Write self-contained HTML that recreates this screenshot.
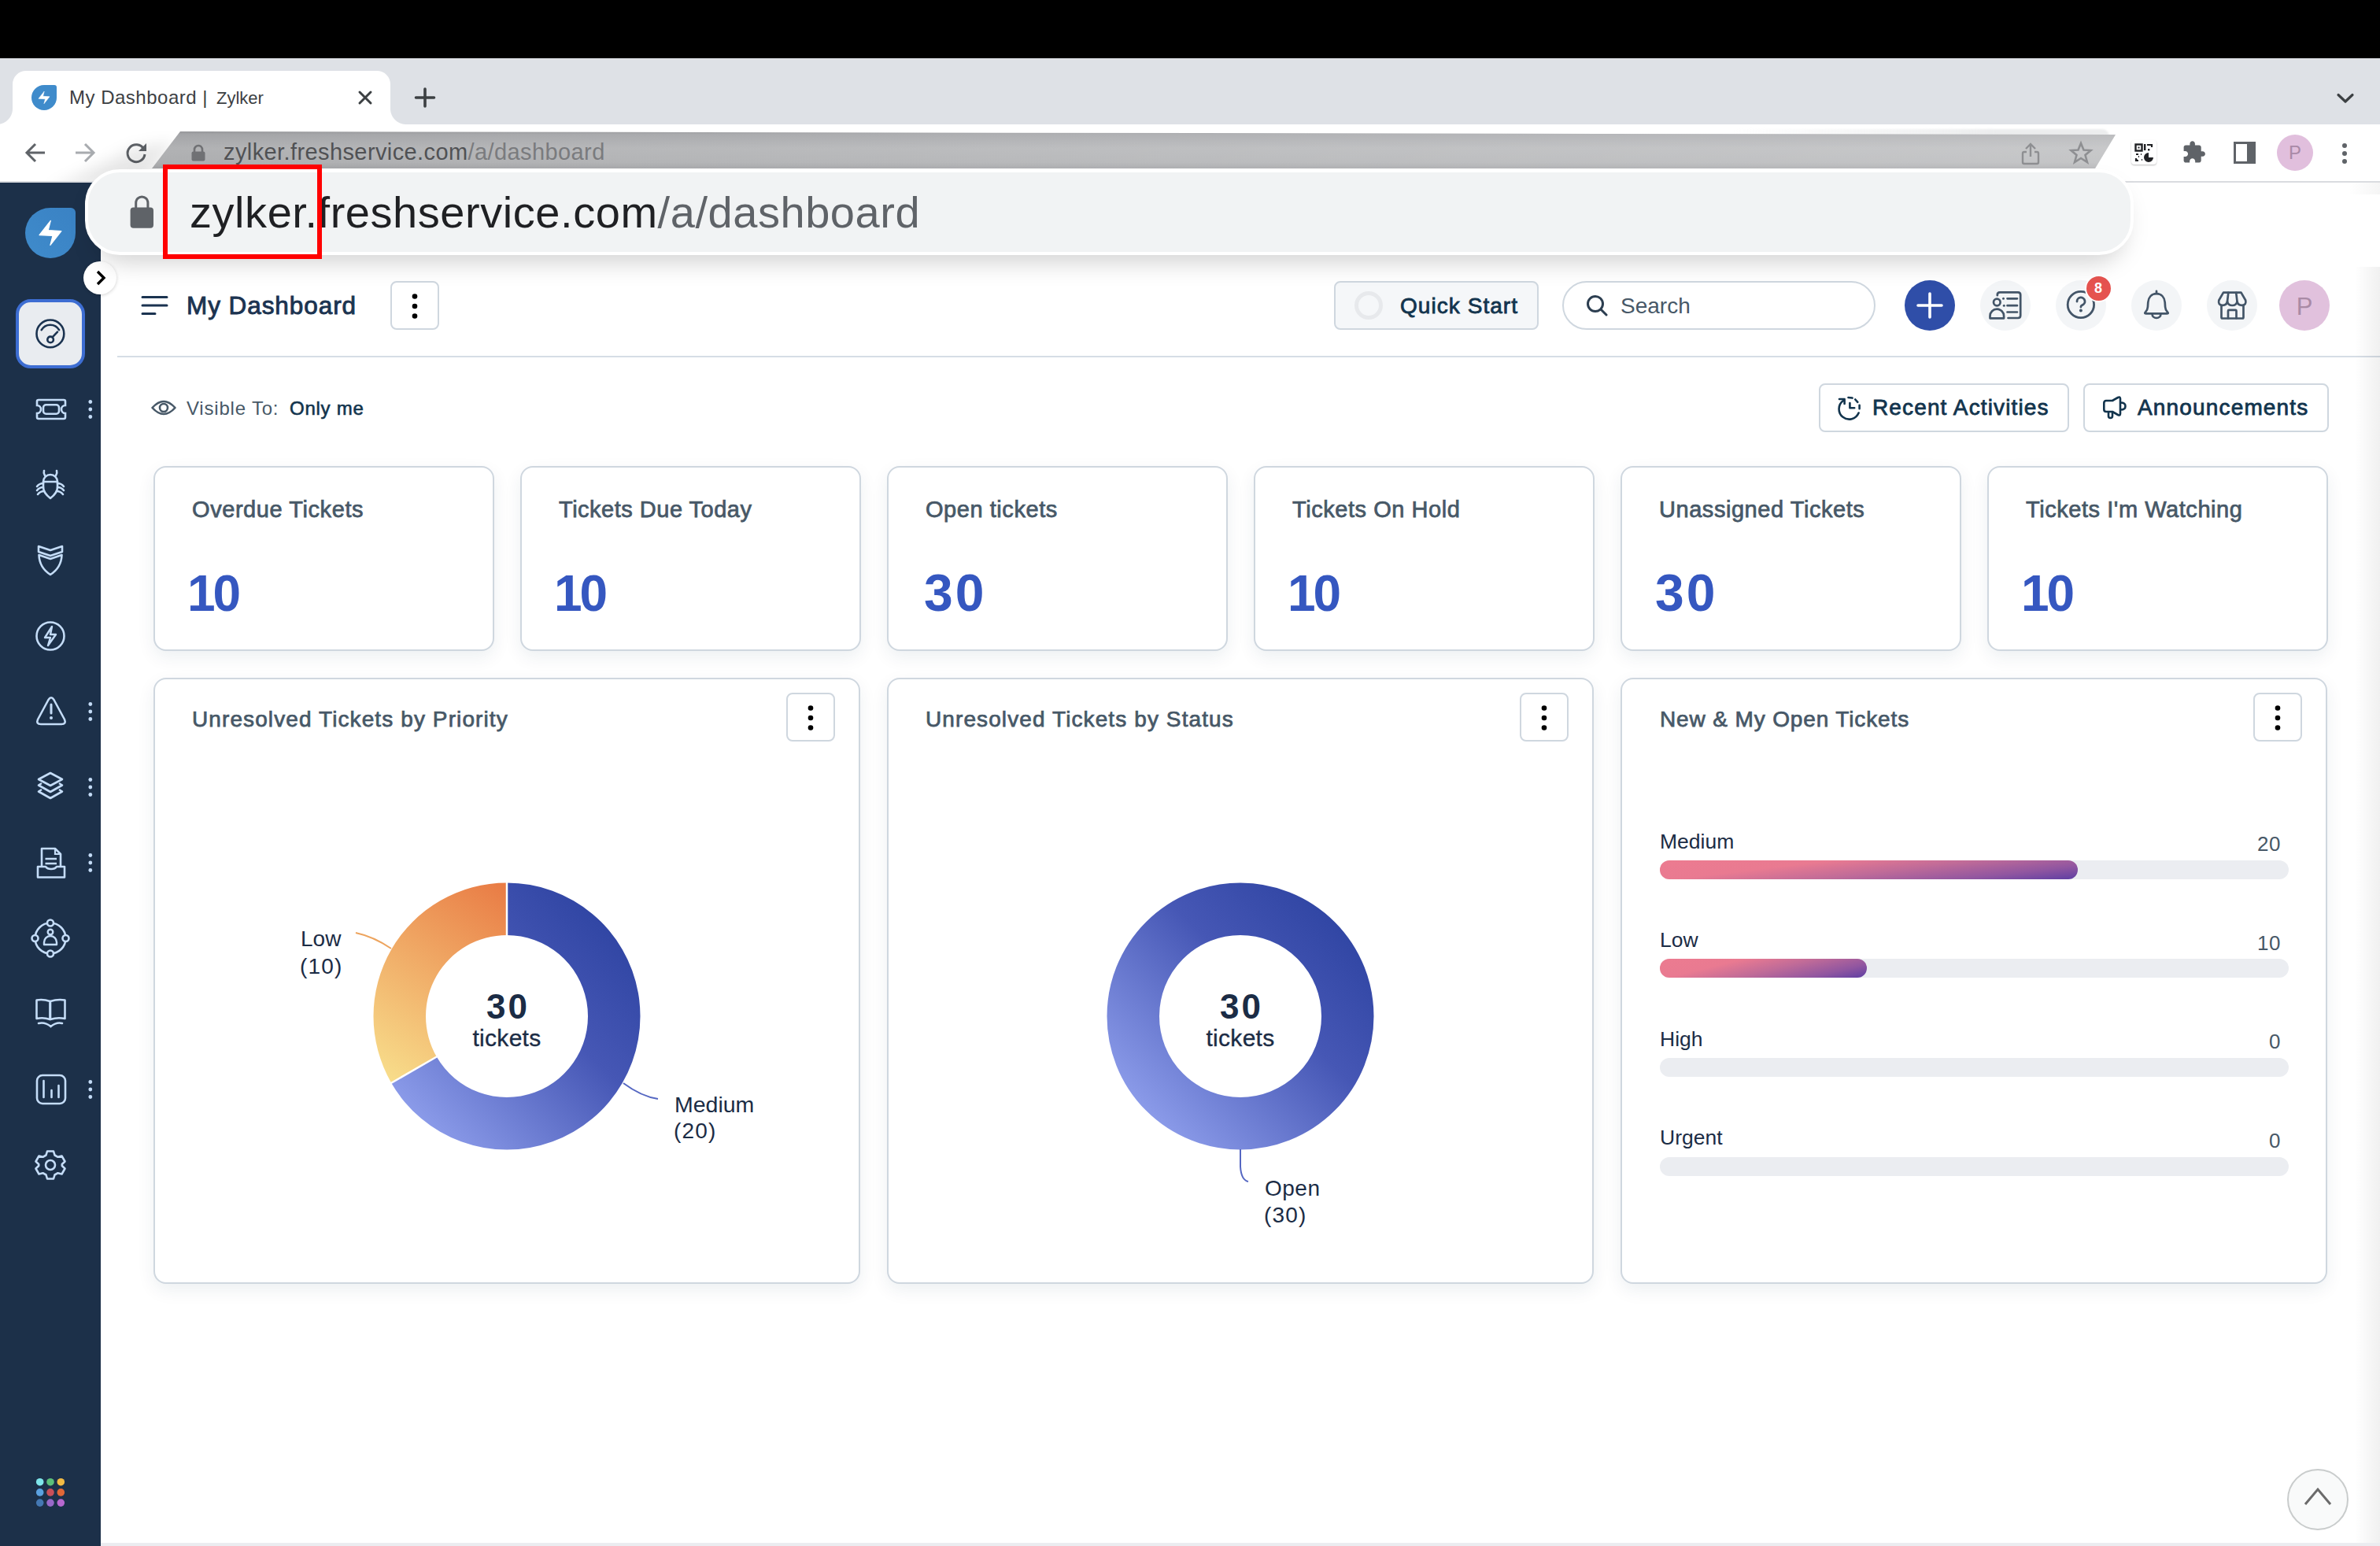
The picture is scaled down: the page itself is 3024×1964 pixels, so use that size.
<!DOCTYPE html>
<html><head><meta charset="utf-8">
<style>
*{margin:0;padding:0;box-sizing:border-box}
html,body{width:3024px;height:1964px;overflow:hidden;background:#fff;font-family:"Liberation Sans",sans-serif}
.a{position:absolute}
.t{position:absolute;line-height:1;white-space:nowrap}
svg{position:absolute;overflow:visible}
</style></head><body>
<!-- black top -->
<div class="a" style="left:0;top:0;width:3024px;height:74px;background:#000"></div>
<!-- tab strip -->
<div class="a" style="left:0;top:74px;width:3024px;height:84px;background:#dee1e6"></div>
<!-- active tab -->
<div class="a" style="left:16px;top:90px;width:480px;height:68px;background:#fff;border-radius:17px 17px 0 0"></div>
<!-- tab foot curves -->
<div class="a" style="left:-4px;top:138px;width:20px;height:20px;background:radial-gradient(circle at 0 0,#dee1e6 19.5px,#fff 20.5px)"></div>
<div class="a" style="left:496px;top:138px;width:20px;height:20px;background:radial-gradient(circle at 100% 0,#dee1e6 19.5px,#fff 20.5px)"></div>
<!-- favicon -->
<svg style="left:40px;top:108px" width="32" height="32" viewBox="0 0 64 64"><path d="M32 0H58a6 6 0 0 1 6 6V32A32 32 0 1 1 32 0Z" fill="#3f8bcb"/><path d="M32.3 16.3L18 34.6L35 35.4L31.9 47.4L45.9 29.6L29.2 28.6Z" fill="#fff" stroke="#fff" stroke-width="1.2" stroke-linejoin="round"/></svg>
<div class="t" style="left:88px;top:112px;font-size:24px;letter-spacing:0.5px;color:#3c4043">My Dashboard <span style="letter-spacing:0">|</span></div>
<div class="t" style="left:275px;top:114px;font-size:22px;color:#3c4043">Zylker</div>
<svg style="left:454px;top:114px" width="20" height="20"><path d="M3 3L17 17M17 3L3 17" stroke="#3c4043" stroke-width="3" stroke-linecap="round"/></svg>
<svg style="left:526px;top:110px" width="28" height="28"><path d="M14 3V25M2.5 14H25.5" stroke="#3c4043" stroke-width="3.6" stroke-linecap="round"/></svg>
<svg style="left:2968px;top:117px" width="24" height="16"><path d="M3 3.5L12 12L21 3.5" stroke="#3c4043" stroke-width="3.2" fill="none" stroke-linecap="round" stroke-linejoin="round"/></svg>
<!-- toolbar -->
<div class="a" style="left:0;top:158px;width:3024px;height:74px;background:#fff;border-bottom:2px solid #dadce0"></div>
<svg style="left:31px;top:181px" width="27" height="26"><path d="M26 13H3M14 2L3 13L14 24" stroke="#5f6368" stroke-width="3" fill="none"/></svg>
<svg style="left:95px;top:181px" width="27" height="26"><path d="M1 13H24M13 2L24 13L13 24" stroke="#a8abaf" stroke-width="3" fill="none"/></svg>
<svg style="left:159px;top:180px" width="28" height="28"><path d="M23.5 9A11 11 0 1 0 25 16" stroke="#5f6368" stroke-width="3" fill="none"/><path d="M27 2V12H17Z" fill="#5f6368"/></svg>
<!-- skewed gray omnibox -->
<div class="a" style="left:2200px;top:164px;width:480px;height:9px;border-radius:0 14px 0 0;background:linear-gradient(90deg,rgba(235,236,237,0),#ecedee 70%);filter:blur(1px)"></div>
<svg style="left:0;top:158px" width="400" height="74"><defs><filter id="omblur" x="-50%" y="-50%" width="200%" height="200%"><feGaussianBlur stdDeviation="9"/></filter><clipPath id="tbclip"><rect x="0" y="0" width="400" height="72"/></clipPath></defs><g clip-path="url(#tbclip)"><path d="M222 22L186 72L60 84L170 30Z" fill="rgba(0,0,0,0.09)" filter="url(#omblur)"/></g></svg>
<svg style="left:0;top:0" width="3024" height="240"><defs><linearGradient id="omg" x1="0" y1="0" x2="0" y2="1"><stop offset="0" stop-color="#9d9ea1"/><stop offset="0.08" stop-color="#acadb0"/><stop offset="0.45" stop-color="#babbbd"/><stop offset="0.85" stop-color="#b6b7b9"/><stop offset="1" stop-color="#abacaf"/></linearGradient><linearGradient id="omh" x1="0" y1="0" x2="1" y2="0"><stop offset="0" stop-color="#000" stop-opacity="0.05"/><stop offset="0.5" stop-color="#fff" stop-opacity="0.05"/><stop offset="1" stop-color="#fff" stop-opacity="0.2"/></linearGradient></defs><path d="M229 167L2688 171L2662 214H193Z" fill="url(#omg)"/><path d="M229 167L2688 171L2662 214H193Z" fill="url(#omh)"/></svg>
<svg style="left:243px;top:184px" width="18" height="21" viewBox="0 0 18 21"><path d="M4 9V6a5 5 0 0 1 10 0V9" stroke="#707174" stroke-width="2.6" fill="none"/><rect x="0.5" y="8.5" width="17" height="12" rx="2" fill="#707174"/></svg>
<div class="t" style="left:284px;top:179px;font-size:29px;letter-spacing:0.4px;color:#505154">zylker.freshservice.com<span style="color:#7a7b7e">/a/dashboard</span></div>
<svg style="left:2569px;top:180px" width="22" height="29"><path d="M11 19V3M5 9L11 3L17 9M6 13H3a2 2 0 0 0-2 2V26a2 2 0 0 0 2 2H19a2 2 0 0 0 2-2V15a2 2 0 0 0-2-2H16" stroke="#8e8f92" stroke-width="2.4" fill="none"/></svg>
<svg style="left:2629px;top:179px" width="30" height="29"><path d="M15 3L18.5 11.5L27.5 12L20.5 18L23 27L15 22L7 27L9.5 18L2.5 12L11.5 11.5Z" stroke="#8e8f92" stroke-width="2.6" fill="none" stroke-linejoin="miter"/></svg>
<!-- right toolbar icons -->
<div class="a" style="left:2708px;top:178px;width:32px;height:31px;background:#fff;border-radius:4px;box-shadow:0 1px 2px rgba(0,0,0,.25)"></div>
<svg style="left:2712px;top:182px" width="24" height="24" viewBox="0 0 24 24"><rect x="1.5" y="1.5" width="8" height="8" stroke="#202124" stroke-width="2.4" fill="none"/><rect x="4.5" y="4.5" width="2" height="2" fill="#202124"/><rect x="12" y="1" width="2.4" height="8" fill="#202124"/><path d="M16 2H22V5" stroke="#202124" stroke-width="2.2" fill="none"/><rect x="17" y="7" width="2.4" height="2.4" fill="#202124"/><path d="M2 14H5M8 14H9M5 17H6M2 19V22H5M9 21H10" stroke="#202124" stroke-width="2.2"/><path d="M18 12A6 6 0 1 0 24 18H18Z" fill="#202124"/></svg>
<svg style="left:2772px;top:178px" width="32" height="32" viewBox="0 0 24.6 24.6"><path d="M20.5 11H19V7c0-1.1-.9-2-2-2h-4V3.5C13 2.12 11.88 1 10.5 1S8 2.12 8 3.5V5H4c-1.1 0-1.99.9-1.99 2v3.8H3.5c1.49 0 2.7 1.21 2.7 2.7s-1.21 2.7-2.7 2.7H2V20c0 1.1.9 2 2 2h3.8v-1.5c0-1.49 1.21-2.7 2.7-2.7 1.49 0 2.7 1.21 2.7 2.7V22H17c1.1 0 2-.9 2-2v-4h1.5c1.38 0 2.5-1.12 2.5-2.5S21.88 11 20.5 11z" fill="#5f6368"/></svg>
<svg style="left:2838px;top:180px" width="28" height="28"><rect x="1.5" y="1.5" width="25" height="25" stroke="#5f6368" stroke-width="3" fill="none"/><rect x="17" y="1" width="10" height="26" fill="#5f6368"/></svg>
<div class="a" style="left:2893px;top:171px;width:46px;height:46px;border-radius:50%;background:#e1bfdd"></div>
<div class="t" style="left:2893px;top:182px;width:46px;text-align:center;font-size:24px;color:#a98aa7">P</div>
<svg style="left:2973px;top:181px" width="12" height="28"><circle cx="6" cy="4" r="3" fill="#5f6368"/><circle cx="6" cy="14" r="3" fill="#5f6368"/><circle cx="6" cy="24" r="3" fill="#5f6368"/></svg>


<!-- sidebar -->
<div class="a" style="left:0;top:232px;width:128px;height:1732px;background:#1c3049"></div>
<svg style="left:32px;top:264px" width="64" height="64" viewBox="0 0 64 64"><defs><linearGradient id="lg1" x1="0" y1="1" x2="1" y2="0"><stop offset="0" stop-color="#3f8bcb"/><stop offset="1" stop-color="#3a82c4"/></linearGradient></defs><path d="M32 0H58a6 6 0 0 1 6 6V32A32 32 0 1 1 32 0Z" fill="url(#lg1)"/><path d="M32.3 16.3L18 34.6L35 35.4L31.9 47.4L45.9 29.6L29.2 28.6Z" fill="#fff" stroke="#fff" stroke-width="1.2" stroke-linejoin="round"/></svg>
<div class="a" style="left:380px"></div>
<div class="a" style="left:20px;top:380px;width:88px;height:88px;border-radius:19px;background:#e9ecf0;border:4px solid #3d6dd2"></div>
<svg style="left:40px;top:400px" width="48" height="48" viewBox="0 0 48 48"><g stroke="#1b3350" stroke-width="2.6" fill="none" stroke-linecap="round"><circle cx="23.9" cy="23.9" r="17.4"/><path d="M12.7 19.1A13 13 0 0 1 35.1 19.1"/><path d="M26.6 28.3L33 21.7"/><circle cx="24.1" cy="31.4" r="3.8"/></g></svg>
<!-- ticket -->
<svg style="left:44px;top:505px" width="42" height="30" viewBox="0 0 42 30"><path d="M5 3H37a2 2 0 0 1 2 2V10a5 5 0 0 0 0 10V25a2 2 0 0 1-2 2H5a2 2 0 0 1-2-2V20a5 5 0 0 0 0-10V5a2 2 0 0 1 2-2Z" stroke="#c4dcf7" stroke-width="2.6" fill="none"/><rect x="11" y="9.3" width="20" height="11.4" rx="3.5" stroke="#c4dcf7" stroke-width="2.6" fill="none"/></svg>
<!-- bug -->
<svg style="left:44px;top:595px" width="40" height="42" viewBox="0 0 40 42"><path d="M11 17a9 9 0 0 1 18 0V24Q29 31 20 38Q11 31 11 24Z" stroke="#c4dcf7" stroke-width="2.6" fill="none" stroke-linejoin="round"/><path d="M11 17H29M13 9Q11 6 12 3M27 9Q29 6 28 3M11 19Q6 19 3 23M11 24Q6 24 3 28M12 29Q7 29 4 33M29 19Q34 19 37 23M29 24Q34 24 37 28M28 29Q33 29 36 33" stroke="#c4dcf7" stroke-width="2.6" fill="none" stroke-linecap="round"/></svg>
<!-- shield -->
<svg style="left:46px;top:691px" width="36" height="42" viewBox="0 0 36 42"><path d="M3 3L18 8L33 3V10L18 15L3 10Z" stroke="#c4dcf7" stroke-width="2.6" fill="none" stroke-linejoin="round"/><path d="M3.5 14L18 19L32.5 14Q32 30 18 39Q4 30 3.5 14Z" stroke="#c4dcf7" stroke-width="2.6" fill="none" stroke-linejoin="round"/></svg>
<!-- bolt circle -->
<svg style="left:44px;top:788px" width="40" height="40" viewBox="0 0 40 40"><circle cx="20" cy="20" r="17.5" stroke="#c4dcf7" stroke-width="2.6" fill="none"/><path d="M22 8L13 22H20L17 32L27 18H20Z" stroke="#c4dcf7" stroke-width="2.4" fill="none" stroke-linejoin="round"/></svg>
<!-- warning -->
<svg style="left:44px;top:884px" width="42" height="40" viewBox="0 0 42 40"><path d="M17.5 5Q21 -0.5 24.5 5L38 30Q40.5 36 34 36H8Q1.5 36 4 30Z" stroke="#c4dcf7" stroke-width="2.6" fill="none" stroke-linejoin="round"/><path d="M21 11V22" stroke="#c4dcf7" stroke-width="3" stroke-linecap="round"/><circle cx="21" cy="28" r="2" fill="#c4dcf7"/></svg>
<!-- layers -->
<svg style="left:44px;top:979px" width="40" height="42" viewBox="0 0 40 42"><path d="M20 3L35 11L20 19L5 11Z" stroke="#c4dcf7" stroke-width="2.6" fill="none" stroke-linejoin="round"/><path d="M9 16L5 18.5L20 27L35 18.5L31 16M9 24L5 26.5L20 35L35 26.5L31 24" stroke="#c4dcf7" stroke-width="2.6" fill="none" stroke-linejoin="round"/></svg>
<!-- doc tray -->
<svg style="left:45px;top:1075px" width="40" height="42" viewBox="0 0 40 42"><path d="M8 25V3H25L32 10V25" stroke="#c4dcf7" stroke-width="2.6" fill="none" stroke-linejoin="round"/><path d="M25 3V10H32" stroke="#c4dcf7" stroke-width="2.2" fill="none"/><path d="M12.5 16H27M12.5 22H27" stroke="#c4dcf7" stroke-width="2.6"/><path d="M3 26H13Q15 29 20 29Q25 29 27 26H37V39.5H3Z" stroke="#c4dcf7" stroke-width="2.6" fill="#1c3049" stroke-linejoin="round"/></svg>
<!-- people orbit -->
<svg style="left:38px;top:1165px" width="52" height="54" viewBox="0 0 52 54"><circle cx="26" cy="27" r="19.5" stroke="#c4dcf7" stroke-width="2.6" fill="none"/><circle cx="26" cy="7.5" r="4" fill="#1c3049" stroke="#c4dcf7" stroke-width="2.6"/><circle cx="26" cy="46.5" r="4" fill="#1c3049" stroke="#c4dcf7" stroke-width="2.6"/><circle cx="6.5" cy="27" r="4" fill="#1c3049" stroke="#c4dcf7" stroke-width="2.6"/><circle cx="45.5" cy="27" r="4" fill="#1c3049" stroke="#c4dcf7" stroke-width="2.6"/><circle cx="26" cy="19" r="3.3" stroke="#c4dcf7" stroke-width="2.4" fill="none"/><path d="M18 35V32a8 8 0 0 1 16 0V35Z" stroke="#c4dcf7" stroke-width="2.4" fill="none" stroke-linejoin="round"/></svg>
<!-- book -->
<svg style="left:44px;top:1267px" width="42" height="42" viewBox="0 0 42 42"><path d="M2.5 3.5Q11 2 19.5 5V28Q11 25 2.5 27Z" stroke="#c4dcf7" stroke-width="2.6" fill="none" stroke-linejoin="round"/><path d="M20 5Q29 2 38.5 3.5V27Q29 25 20 28Z" stroke="#c4dcf7" stroke-width="2.6" fill="none" stroke-linejoin="round"/><path d="M5 33Q13 31 20.5 37Q28 31 35 33" stroke="#c4dcf7" stroke-width="2.6" fill="none" stroke-linecap="round"/></svg>
<!-- chart -->
<svg style="left:44px;top:1363px" width="42" height="42" viewBox="0 0 42 42"><rect x="3" y="3" width="36" height="36" rx="7" stroke="#c4dcf7" stroke-width="2.6" fill="none"/><path d="M11.5 10V31M21.5 22V31M30.5 16V31" stroke="#c4dcf7" stroke-width="2.6" stroke-linecap="round"/></svg>
<!-- gear -->
<svg style="left:43px;top:1459px" width="42" height="42" viewBox="0 0 42 42"><path d="M17 3.5H25L26.5 8.5L30.5 10.8L35.5 9.5L39.5 16.5L35.8 20V22L39.5 25.5L35.5 32.5L30.5 31.2L26.5 33.5L25 38.5H17L15.5 33.5L11.5 31.2L6.5 32.5L2.5 25.5L6.2 22V20L2.5 16.5L6.5 9.5L11.5 10.8L15.5 8.5Z" stroke="#c4dcf7" stroke-width="2.6" fill="none" stroke-linejoin="round"/><circle cx="21" cy="21" r="6" stroke="#c4dcf7" stroke-width="2.6" fill="none"/></svg>
<svg style="left:110px;top:505px" width="10" height="30"><circle cx="4.8" cy="5.5" r="2.4" fill="#c4dcf7"/><circle cx="4.8" cy="15" r="2.4" fill="#c4dcf7"/><circle cx="4.8" cy="24.5" r="2.4" fill="#c4dcf7"/></svg>
<svg style="left:110px;top:889px" width="10" height="30"><circle cx="4.8" cy="5.5" r="2.4" fill="#c4dcf7"/><circle cx="4.8" cy="15" r="2.4" fill="#c4dcf7"/><circle cx="4.8" cy="24.5" r="2.4" fill="#c4dcf7"/></svg>
<svg style="left:110px;top:985px" width="10" height="30"><circle cx="4.8" cy="5.5" r="2.4" fill="#c4dcf7"/><circle cx="4.8" cy="15" r="2.4" fill="#c4dcf7"/><circle cx="4.8" cy="24.5" r="2.4" fill="#c4dcf7"/></svg>
<svg style="left:110px;top:1081px" width="10" height="30"><circle cx="4.8" cy="5.5" r="2.4" fill="#c4dcf7"/><circle cx="4.8" cy="15" r="2.4" fill="#c4dcf7"/><circle cx="4.8" cy="24.5" r="2.4" fill="#c4dcf7"/></svg>
<svg style="left:110px;top:1369px" width="10" height="30"><circle cx="4.8" cy="5.5" r="2.4" fill="#c4dcf7"/><circle cx="4.8" cy="15" r="2.4" fill="#c4dcf7"/><circle cx="4.8" cy="24.5" r="2.4" fill="#c4dcf7"/></svg>
<svg style="left:40px;top:1872px" width="48" height="48"><circle cx="10.7" cy="10.7" r="4.8" fill="#7fe6eb"/><circle cx="24.0" cy="10.7" r="4.8" fill="#5bbf7a"/><circle cx="37.3" cy="10.7" r="4.8" fill="#f2ba44"/><circle cx="10.7" cy="23.9" r="4.8" fill="#5ba1e0"/><circle cx="24.0" cy="23.9" r="4.8" fill="#c74f5a"/><circle cx="37.3" cy="23.9" r="4.8" fill="#df6737"/><circle cx="10.7" cy="37.099999999999994" r="4.8" fill="#4478b3"/><circle cx="24.0" cy="37.099999999999994" r="4.8" fill="#9869c9"/><circle cx="37.3" cy="37.099999999999994" r="4.8" fill="#b768cf"/></svg>
<div class="a" style="left:106px;top:332px;width:42px;height:42px;border-radius:50%;background:#fff;box-shadow:0 1px 4px rgba(0,0,0,0.18)"></div>
<svg style="left:120px;top:342px" width="16" height="22"><path d="M4 3L12 11L4 19" stroke="#000" stroke-width="3.4" fill="none"/></svg>
<!-- main header -->
<svg style="left:178px;top:373px" width="36" height="30"><path d="M3 4.5H34M3 15H34M3 25.5H19" stroke="#1b3350" stroke-width="3" stroke-linecap="round"/></svg>
<div class="t" style="left:237px;top:373.3px;font-size:31.5px;color:#1b3350;letter-spacing:0.93px;-webkit-text-stroke:0.9px #1b3350">My Dashboard</div>
<div class="a" style="left:496px;top:357px;width:62px;height:62px;border:2px solid #cfd7df;border-radius:8px;background:#fff"></div>
<svg style="left:522.0px;top:371.0px" width="10" height="34"><circle cx="5" cy="5.5" r="3.3" fill="#000"/><circle cx="5" cy="18" r="3.3" fill="#000"/><circle cx="5" cy="30.5" r="3.3" fill="#000"/></svg>
<div class="a" style="left:1695px;top:357px;width:260px;height:62px;border:2px solid #cfd7df;border-radius:8px;background:#f5f7f9"></div>
<div class="a" style="left:1721px;top:370px;width:36px;height:36px;border-radius:50%;border:5px solid #e7e9ec"></div>
<div class="t" style="left:1779px;top:374.8px;font-size:28px;color:#12344d;letter-spacing:1.05px;-webkit-text-stroke:0.8px #12344d">Quick Start</div>
<div class="a" style="left:1985px;top:357px;width:398px;height:62px;border:2px solid #cfd7df;border-radius:31px;background:#fff"></div>
<svg style="left:2014px;top:373px" width="32" height="32"><circle cx="13" cy="13" r="9.5" stroke="#2c3e50" stroke-width="3" fill="none"/><path d="M20 20L27 27" stroke="#2c3e50" stroke-width="3" stroke-linecap="round"/></svg>
<div class="t" style="left:2059px;top:374.8px;font-size:28px;font-weight:normal;color:#475867;letter-spacing:0px;">Search</div>
<div class="a" style="left:2420px;top:356px;width:64px;height:64px;border-radius:50%;background:#2f4ea8"></div>
<svg style="left:2432px;top:368px" width="40" height="40"><path d="M20 5V35M5 20H35" stroke="#fff" stroke-width="3.6" stroke-linecap="round"/></svg>
<div class="a" style="left:2516px;top:356px;width:64px;height:64px;border-radius:50%;background:#f3f5f7"></div>
<div class="a" style="left:2612px;top:356px;width:64px;height:64px;border-radius:50%;background:#f3f5f7"></div>
<div class="a" style="left:2708px;top:356px;width:64px;height:64px;border-radius:50%;background:#f3f5f7"></div>
<div class="a" style="left:2804px;top:356px;width:64px;height:64px;border-radius:50%;background:#f3f5f7"></div>
<svg style="left:2510px;top:350px" width="80" height="80" viewBox="0 0 80 80"><g stroke="#435568" stroke-width="2.7" fill="none" stroke-linecap="round" stroke-linejoin="round"><path d="M27.8 25.2V24.5Q27.8 21.3 31 21.3H54Q57.2 21.3 57.2 24.5V50.8Q57.2 54 54 54H41.5"/><circle cx="27.3" cy="34" r="4.3"/><path d="M18.5 54.3V51.5a8.8 8.8 0 0 1 17.6 0V54.3Z"/><path d="M40.5 29.3H53M40.5 38.2H53M40.5 46.5H53"/></g><circle cx="35.5" cy="29.3" r="1.5" fill="#435568"/><circle cx="36.3" cy="38.2" r="1.5" fill="#435568"/></svg>
<svg style="left:2610px;top:350px" width="70" height="70" viewBox="0 0 70 70"><circle cx="33.9" cy="37" r="16.7" stroke="#435568" stroke-width="2.8" fill="none"/><path d="M29 33a5 5 0 1 1 6.8 4.6Q33.9 38.6 33.9 40" stroke="#435568" stroke-width="2.8" fill="none" stroke-linecap="round"/><circle cx="33.9" cy="44.6" r="2" fill="#435568"/></svg>
<div class="a" style="left:2648.5px;top:348.5px;width:35px;height:35px;border-radius:50%;background:#e5534f;border:2px solid #fff"></div>
<div class="t" style="left:2650px;top:357.3px;font-size:18px;font-weight:bold;color:#fff;width:32px;text-align:center">8</div>
<svg style="left:2700px;top:350px" width="80" height="80" viewBox="0 0 80 80"><g stroke="#435568" stroke-width="2.7" fill="none" stroke-linecap="round" stroke-linejoin="round"><path d="M40 19.8V22.8"/><path d="M40 23.2C33.5 23.2 29.8 28 29.3 34L28.9 40Q28.6 44 26 46.5Q24.2 48.3 26.5 48.3H53.5Q55.8 48.3 54 46.5Q51.4 44 51.1 40L50.7 34C50.2 28 46.5 23.2 40 23.2Z"/><path d="M34.6 49.2a5.4 4.8 0 0 0 10.8 0"/></g></svg>
<svg style="left:2790px;top:350px" width="80" height="80" viewBox="0 0 80 80"><g stroke="#435568" stroke-width="2.7" fill="none" stroke-linecap="round" stroke-linejoin="round"><path d="M35 21.6H57.5L63.2 31.5Q64.5 37.5 59 37.8Q53.3 38 52.5 33Q51.5 38 46.3 38Q41 38 40 33Q39.2 38 33.5 37.8Q28 37.5 29.3 31.5Z"/><path d="M41.3 21.8L40 33M51.2 21.8L52.5 33"/><path d="M32.5 38.5V53Q32.5 54.5 34 54.5H59Q60.5 54.5 60.5 53V38.5"/><path d="M41 54.2V45Q41 43.9 42 43.9H50.5Q51.5 43.9 51.5 45V54.2"/></g></svg>
<div class="a" style="left:2896px;top:356px;width:64px;height:64px;border-radius:50%;background:#e1c1dd"></div>
<div class="t" style="left:2896px;top:373.8px;font-size:31px;font-weight:normal;color:#a98aa5;letter-spacing:0px;width:64px;text-align:center">P</div>
<svg style="left:192px;top:506px" width="32" height="24"><path d="M1.5 12Q16 -4 30.5 12Q16 28 1.5 12Z" stroke="#475867" stroke-width="2.6" fill="none" stroke-linejoin="round"/><circle cx="16" cy="12" r="5" stroke="#475867" stroke-width="2.6" fill="none"/></svg>
<div class="t" style="left:237px;top:506.7px;font-size:24px;font-weight:normal;color:#475867;letter-spacing:0.8px;">Visible To:</div>
<div class="t" style="left:368px;top:506.7px;font-size:24px;color:#12344d;letter-spacing:0.75px;-webkit-text-stroke:0.6px #12344d">Only me</div>
<div class="a" style="left:2311px;top:487px;width:318px;height:62px;border:2px solid #cfd7df;border-radius:8px;background:#fff"></div>
<svg style="left:2325px;top:495px" width="50" height="50" viewBox="0 0 50 50"><g stroke="#12344d" stroke-width="2.6" fill="none" stroke-linecap="round" stroke-linejoin="round"><path d="M17 14A13 13 0 1 0 36.6 29.5"/><path d="M12 12H18.6V18"/><path d="M23.5 10Q26 10 28.5 10.6M32.3 12.5L35.3 15.8M37.6 19.8V24.2"/><path d="M25.4 17V23.2H31.2"/></g></svg>
<div class="t" style="left:2379px;top:504.3px;font-size:28px;color:#12344d;letter-spacing:1.13px;-webkit-text-stroke:0.8px #12344d">Recent Activities</div>
<div class="a" style="left:2647px;top:487px;width:312px;height:62px;border:2px solid #cfd7df;border-radius:8px;background:#fff"></div>
<svg style="left:2660px;top:495px" width="50" height="50" viewBox="0 0 50 50"><g stroke="#12344d" stroke-width="2.6" fill="none" stroke-linecap="round" stroke-linejoin="round"><path d="M16 14H24L31 10Q34 8.5 34 11.5V30.5Q34 33.5 31 32L24 28H16Q13.3 28 13.3 25V17Q13.3 14 16 14Z"/><path d="M34.5 16.5Q40.5 16.5 40.5 21Q40.5 25.5 34.5 25.5"/><path d="M19 28.5V33.5Q19 36 21.5 36Q24 36 24 33.5V28.5"/></g></svg>
<div class="t" style="left:2716px;top:504.3px;font-size:28px;color:#12344d;letter-spacing:1.16px;-webkit-text-stroke:0.8px #12344d">Announcements</div>
<div class="a" style="left:195.0px;top:592px;width:433px;height:235px;border:2px solid #cfd7df;border-radius:16px;background:#fff;box-shadow:0 8px 22px rgba(18,52,77,0.075)"></div>
<div class="t" style="left:244px;top:633.0px;font-size:29px;color:#475867;letter-spacing:0.57px;-webkit-text-stroke:0.75px #475867">Overdue Tickets</div>
<div class="t" style="left:238px;top:721.8px;font-size:64px;font-weight:bold;color:#3557c0;letter-spacing:-3px;">10</div>
<div class="a" style="left:661.0px;top:592px;width:433px;height:235px;border:2px solid #cfd7df;border-radius:16px;background:#fff;box-shadow:0 8px 22px rgba(18,52,77,0.075)"></div>
<div class="t" style="left:710px;top:633.0px;font-size:29px;color:#475867;letter-spacing:0.5px;-webkit-text-stroke:0.75px #475867">Tickets Due Today</div>
<div class="t" style="left:704px;top:721.8px;font-size:64px;font-weight:bold;color:#3557c0;letter-spacing:-3px;">10</div>
<div class="a" style="left:1127.0px;top:592px;width:433px;height:235px;border:2px solid #cfd7df;border-radius:16px;background:#fff;box-shadow:0 8px 22px rgba(18,52,77,0.075)"></div>
<div class="t" style="left:1176px;top:633.0px;font-size:29px;color:#475867;letter-spacing:0.55px;-webkit-text-stroke:0.75px #475867">Open tickets</div>
<div class="t" style="left:1174px;top:720.1px;font-size:66px;font-weight:bold;color:#3557c0;letter-spacing:3px;">30</div>
<div class="a" style="left:1593.0px;top:592px;width:433px;height:235px;border:2px solid #cfd7df;border-radius:16px;background:#fff;box-shadow:0 8px 22px rgba(18,52,77,0.075)"></div>
<div class="t" style="left:1642px;top:633.0px;font-size:29px;color:#475867;letter-spacing:0.55px;-webkit-text-stroke:0.75px #475867">Tickets On Hold</div>
<div class="t" style="left:1636px;top:721.8px;font-size:64px;font-weight:bold;color:#3557c0;letter-spacing:-3px;">10</div>
<div class="a" style="left:2059.0px;top:592px;width:433px;height:235px;border:2px solid #cfd7df;border-radius:16px;background:#fff;box-shadow:0 8px 22px rgba(18,52,77,0.075)"></div>
<div class="t" style="left:2108px;top:633.0px;font-size:29px;color:#475867;letter-spacing:0.55px;-webkit-text-stroke:0.75px #475867">Unassigned Tickets</div>
<div class="t" style="left:2103px;top:720.1px;font-size:66px;font-weight:bold;color:#3557c0;letter-spacing:3px;">30</div>
<div class="a" style="left:2525.0px;top:592px;width:433px;height:235px;border:2px solid #cfd7df;border-radius:16px;background:#fff;box-shadow:0 8px 22px rgba(18,52,77,0.075)"></div>
<div class="t" style="left:2574px;top:633.0px;font-size:29px;color:#475867;letter-spacing:0.55px;-webkit-text-stroke:0.75px #475867">Tickets I'm Watching</div>
<div class="t" style="left:2568px;top:721.8px;font-size:64px;font-weight:bold;color:#3557c0;letter-spacing:-3px;">10</div>
<div class="a" style="left:195px;top:861px;width:898px;height:770px;border:2px solid #cfd7df;border-radius:16px;background:#fff;box-shadow:0 8px 22px rgba(18,52,77,0.075)"></div>
<div class="a" style="left:999px;top:880px;width:62px;height:62px;border:2px solid #cfd7df;border-radius:8px;background:#fff"></div>
<svg style="left:1025.0px;top:894.0px" width="10" height="34"><circle cx="5" cy="5.5" r="3.3" fill="#000"/><circle cx="5" cy="18" r="3.3" fill="#000"/><circle cx="5" cy="30.5" r="3.3" fill="#000"/></svg>
<div class="a" style="left:1127px;top:861px;width:898px;height:770px;border:2px solid #cfd7df;border-radius:16px;background:#fff;box-shadow:0 8px 22px rgba(18,52,77,0.075)"></div>
<div class="a" style="left:1931px;top:880px;width:62px;height:62px;border:2px solid #cfd7df;border-radius:8px;background:#fff"></div>
<svg style="left:1957.0px;top:894.0px" width="10" height="34"><circle cx="5" cy="5.5" r="3.3" fill="#000"/><circle cx="5" cy="18" r="3.3" fill="#000"/><circle cx="5" cy="30.5" r="3.3" fill="#000"/></svg>
<div class="a" style="left:2059px;top:861px;width:898px;height:770px;border:2px solid #cfd7df;border-radius:16px;background:#fff;box-shadow:0 8px 22px rgba(18,52,77,0.075)"></div>
<div class="a" style="left:2863px;top:880px;width:62px;height:62px;border:2px solid #cfd7df;border-radius:8px;background:#fff"></div>
<svg style="left:2889.0px;top:894.0px" width="10" height="34"><circle cx="5" cy="5.5" r="3.3" fill="#000"/><circle cx="5" cy="18" r="3.3" fill="#000"/><circle cx="5" cy="30.5" r="3.3" fill="#000"/></svg>
<div class="t" style="left:244px;top:900.3px;font-size:28px;color:#475867;letter-spacing:1.1px;-webkit-text-stroke:0.75px #475867">Unresolved Tickets by Priority</div>
<div class="t" style="left:1176px;top:900.3px;font-size:28px;color:#475867;letter-spacing:1.1px;-webkit-text-stroke:0.75px #475867">Unresolved Tickets by Status</div>
<div class="t" style="left:2109px;top:900.3px;font-size:28px;color:#475867;letter-spacing:0.87px;-webkit-text-stroke:0.75px #475867">New &amp; My Open Tickets</div>
<!-- charts -->
<svg style="left:0;top:0" width="3024" height="1964">
<defs>
<linearGradient id="gmed" gradientUnits="userSpaceOnUse" x1="790" y1="1150" x2="500" y2="1440"><stop offset="0" stop-color="#2c42a0"/><stop offset="0.4" stop-color="#4657b5"/><stop offset="0.92" stop-color="#8c9cea"/><stop offset="1" stop-color="#8d9eeb"/></linearGradient>
<linearGradient id="glow" gradientUnits="userSpaceOnUse" x1="640" y1="1125" x2="480" y2="1370"><stop offset="0" stop-color="#e97c45"/><stop offset="1" stop-color="#f8df8c"/></linearGradient>
<linearGradient id="gopen" gradientUnits="userSpaceOnUse" x1="1722" y1="1150" x2="1432" y2="1440"><stop offset="0" stop-color="#2c42a0"/><stop offset="0.4" stop-color="#4657b5"/><stop offset="0.92" stop-color="#8c9cea"/><stop offset="1" stop-color="#8d9eeb"/></linearGradient>
</defs>
<path d="M644.00 1121.50A169.5 169.5 0 1 1 497.21 1375.75L554.80 1342.50A103 103 0 1 0 644.00 1188.00Z" fill="url(#gmed)"/>
<path d="M497.21 1375.75A169.5 169.5 0 0 1 644.00 1121.50L644.00 1188.00A103 103 0 0 0 554.80 1342.50Z" fill="url(#glow)"/>
<path d="M644.00 1189.00L644.00 1120.50" stroke="#fff" stroke-width="2.5"/>
<path d="M555.67 1342.00L496.34 1376.25" stroke="#fff" stroke-width="2.5"/>
<path d="M497 1205Q475 1190 452 1185" stroke="#eda45e" stroke-width="2" fill="none"/>
<path d="M792 1376Q815 1393 836 1396" stroke="#5567c2" stroke-width="2" fill="none"/>
<circle cx="1576" cy="1291" r="136.25" stroke="url(#gopen)" stroke-width="66.5" fill="none"/>
<path d="M1576 1460V1482Q1577 1499 1586 1501" stroke="#5567c2" stroke-width="2" fill="none"/>
</svg>
<div class="t" style="left:594px;top:1256.6px;font-size:44px;font-weight:bold;color:#1b2c45;letter-spacing:3px;text-indent:3px;width:100px;text-align:center">30</div>
<div class="t" style="left:574px;top:1303.6px;font-size:30px;font-weight:normal;color:#1b2c45;letter-spacing:0.3px;width:140px;text-align:center;-webkit-text-stroke:0.35px #1b2c45">tickets</div>
<div class="t" style="left:1526px;top:1256.6px;font-size:44px;font-weight:bold;color:#1b2c45;letter-spacing:3px;text-indent:3px;width:100px;text-align:center">30</div>
<div class="t" style="left:1506px;top:1303.6px;font-size:30px;font-weight:normal;color:#1b2c45;letter-spacing:0.3px;width:140px;text-align:center;-webkit-text-stroke:0.35px #1b2c45">tickets</div>
<div class="t" style="left:382px;top:1179.3px;font-size:28px;font-weight:normal;color:#1b2c45;letter-spacing:0px;">Low</div>
<div class="t" style="left:381px;top:1214.3px;font-size:28px;font-weight:normal;color:#1b2c45;letter-spacing:1.2px;">(10)</div>
<div class="t" style="left:857px;top:1388.9px;font-size:28.5px;font-weight:normal;color:#1b2c45;letter-spacing:0px;">Medium</div>
<div class="t" style="left:856px;top:1423.3px;font-size:28px;font-weight:normal;color:#1b2c45;letter-spacing:1.2px;">(20)</div>
<div class="t" style="left:1607px;top:1496.3px;font-size:28px;font-weight:normal;color:#1b2c45;letter-spacing:0.5px;">Open</div>
<div class="t" style="left:1606px;top:1530.3px;font-size:28px;font-weight:normal;color:#1b2c45;letter-spacing:1.2px;">(30)</div>
<div class="t" style="left:2109px;top:1055.6px;font-size:26.5px;font-weight:normal;color:#1b2c45;letter-spacing:0px;">Medium</div>
<div class="t" style="left:2798px;top:1059.0px;font-size:26px;font-weight:normal;color:#475867;letter-spacing:0.5px;width:100px;text-align:right">20</div>
<div class="a" style="left:2109px;top:1093px;width:799px;height:24px;border-radius:12px;background:#ebedf1"></div>
<svg style="left:2109px;top:1093px" width="531" height="24"><defs><linearGradient id="bg1093" x1="0" y1="0" x2="1.206" y2="0.458"><stop offset="0" stop-color="#ec7b90"/><stop offset="0.3" stop-color="#e97a91"/><stop offset="0.55" stop-color="#c06b98"/><stop offset="0.8" stop-color="#9156a0"/><stop offset="1" stop-color="#5e3ea3"/></linearGradient></defs><rect x="0" y="0" width="531" height="24" rx="12" fill="url(#bg1093)"/></svg>
<div class="t" style="left:2109px;top:1181.2px;font-size:26.5px;font-weight:normal;color:#1b2c45;letter-spacing:0px;">Low</div>
<div class="t" style="left:2798px;top:1184.6px;font-size:26px;font-weight:normal;color:#475867;letter-spacing:0.5px;width:100px;text-align:right">10</div>
<div class="a" style="left:2109px;top:1218px;width:799px;height:24px;border-radius:12px;background:#ebedf1"></div>
<svg style="left:2109px;top:1218px" width="263" height="24"><defs><linearGradient id="bg1218" x1="0" y1="0" x2="1.206" y2="0.458"><stop offset="0" stop-color="#ec7b90"/><stop offset="0.3" stop-color="#e97a91"/><stop offset="0.55" stop-color="#c06b98"/><stop offset="0.8" stop-color="#9156a0"/><stop offset="1" stop-color="#5e3ea3"/></linearGradient></defs><rect x="0" y="0" width="263" height="24" rx="12" fill="url(#bg1218)"/></svg>
<div class="t" style="left:2109px;top:1306.8px;font-size:26.5px;font-weight:normal;color:#1b2c45;letter-spacing:0px;">High</div>
<div class="t" style="left:2798px;top:1310.2px;font-size:26px;font-weight:normal;color:#475867;letter-spacing:0.5px;width:100px;text-align:right">0</div>
<div class="a" style="left:2109px;top:1344px;width:799px;height:24px;border-radius:12px;background:#ebedf1"></div>
<div class="t" style="left:2109px;top:1432.4px;font-size:26.5px;font-weight:normal;color:#1b2c45;letter-spacing:0px;">Urgent</div>
<div class="t" style="left:2798px;top:1435.8px;font-size:26px;font-weight:normal;color:#475867;letter-spacing:0.5px;width:100px;text-align:right">0</div>
<div class="a" style="left:2109px;top:1470px;width:799px;height:24px;border-radius:12px;background:#ebedf1"></div>
<!-- scroll top -->
<div class="a" style="left:2906px;top:1866px;width:78px;height:78px;border-radius:50%;background:#f9fafa;border:2px solid #c9cccc"></div>
<svg style="left:2926px;top:1888px" width="38" height="26"><path d="M3 23L19 4L35 23" stroke="#6b6b6b" stroke-width="3" fill="none"/></svg>
<!-- header border -->
<div class="a" style="left:149px;top:452px;width:2875px;height:2px;background:#d6dde5"></div>

<div class="a" style="left:2992px;top:339px;width:32px;height:1621px;background:linear-gradient(90deg,rgba(0,0,0,0),rgba(0,0,0,0.06))"></div>
<div class="a" style="left:2984px;top:232px;width:40px;height:15px;background:linear-gradient(90deg,rgba(0,0,0,0),rgba(0,0,0,0.04))"></div>
<!-- bottom strip -->
<div class="a" style="left:128px;top:1960px;width:2896px;height:4px;background:#ebecf0"></div>

<!-- magnified pill overlay -->
<div class="a" style="left:118px;top:235px;width:2583px;height:100px;border-radius:42px;background:rgba(0,0,0,0.16);filter:blur(14px)"></div>
<div class="a" style="left:108px;top:215px;width:2603px;height:109px;border-radius:44px;background:#f1f3f4;border:4px solid #fff;"></div>
<svg style="left:160px;top:244px" width="40" height="50" viewBox="0 0 40 50"><path d="M12.7 21V13.5a7.6 7.6 0 0 1 15.2 0V21" stroke="#5f6368" stroke-width="3" fill="none"/><rect x="5.6" y="19.4" width="29.4" height="26.3" rx="4" fill="#5f6368"/></svg>
<div class="t" style="left:241px;top:242px;font-size:56px;letter-spacing:0.55px;color:#1f2023">zylker.freshservice.com<span style="color:#5f6368">/a/dashboard</span></div>
<div class="a" style="left:207px;top:209px;width:202px;height:120px;border:6px solid #ff0000"></div>

</body></html>
